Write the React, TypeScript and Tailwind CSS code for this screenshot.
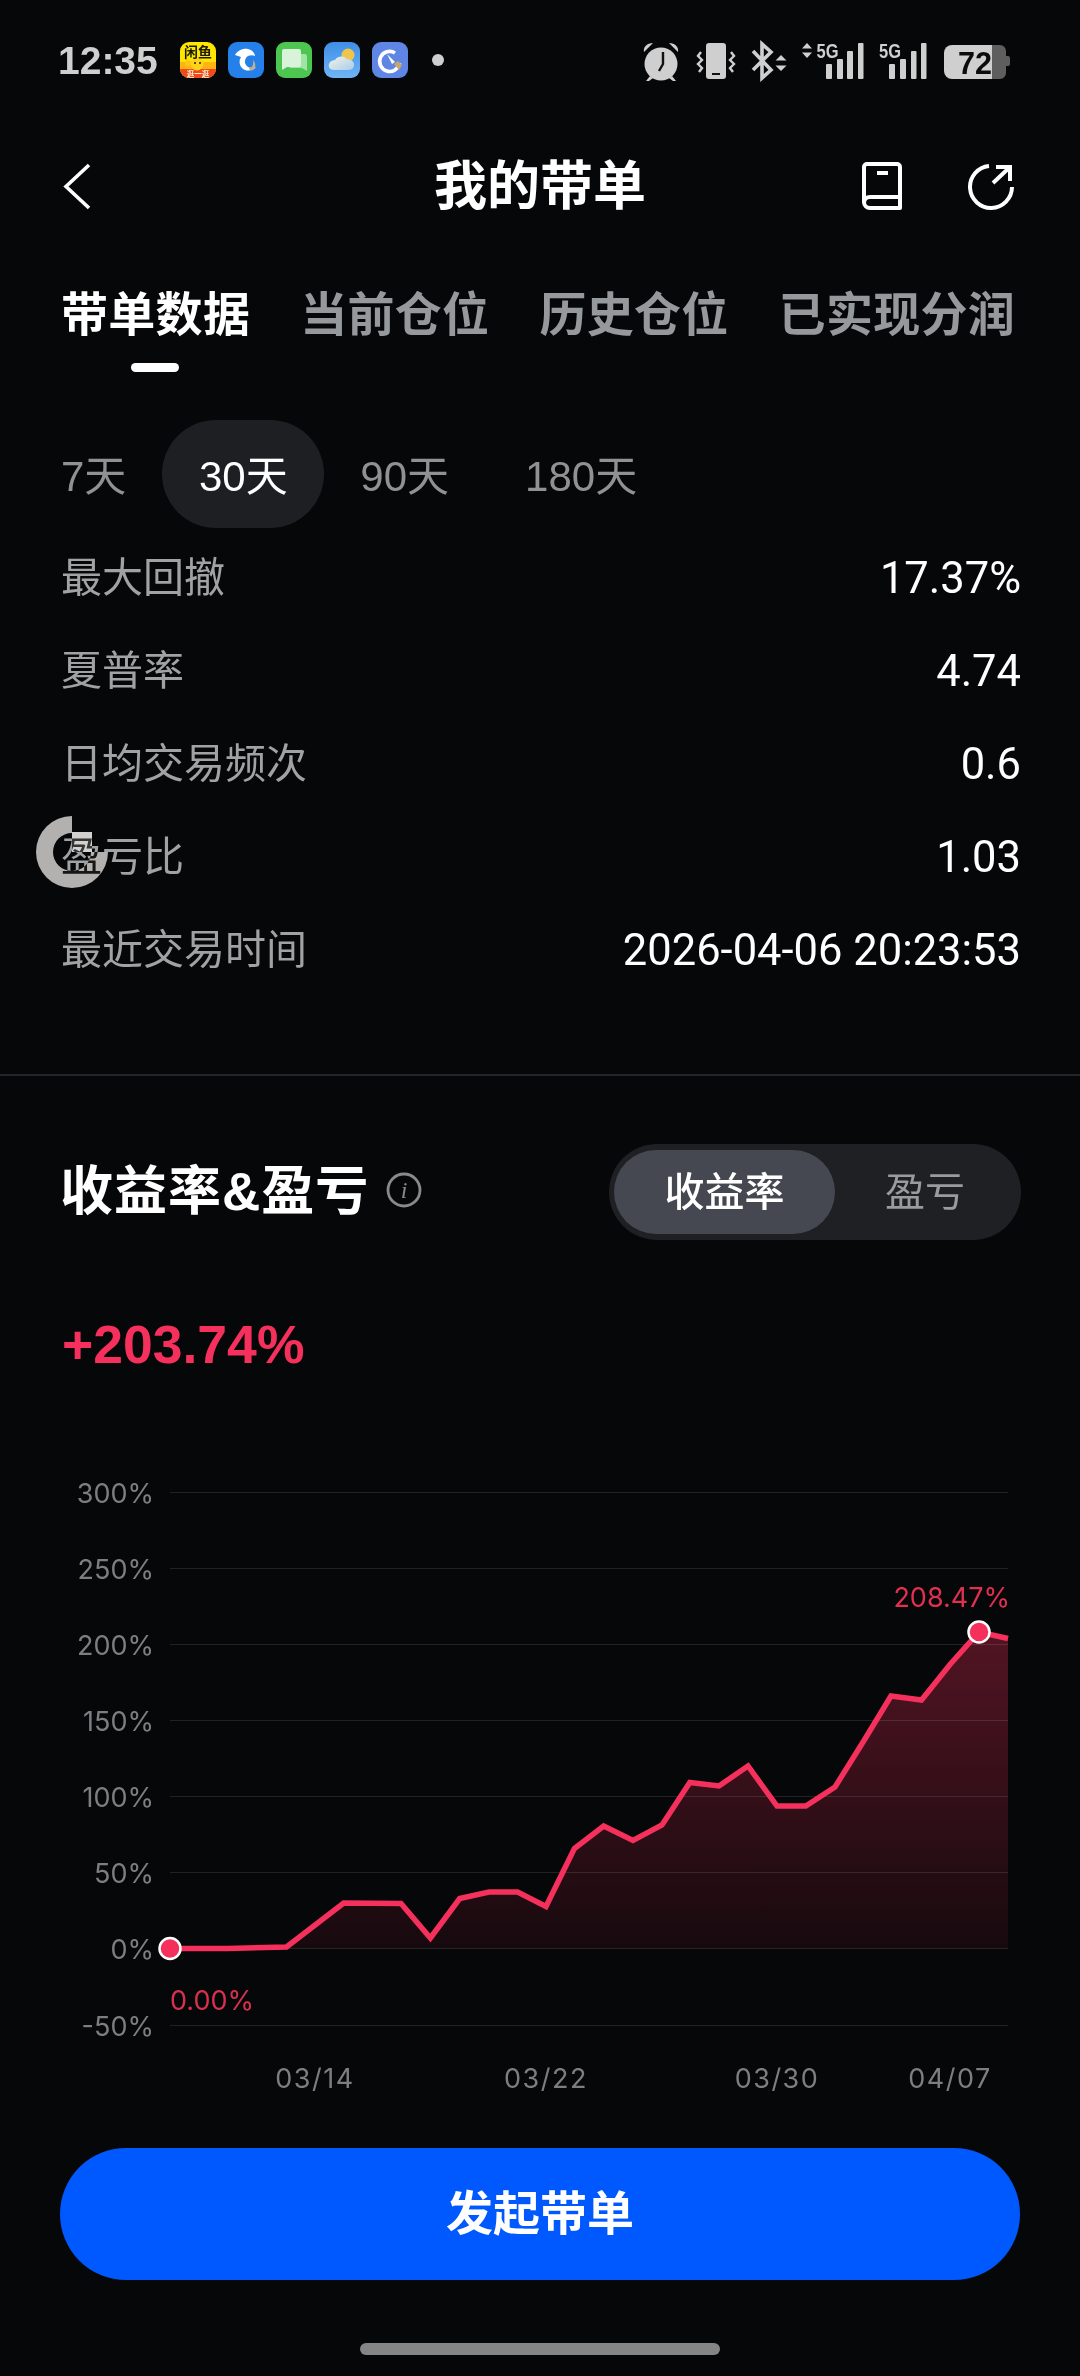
import React from 'react';

const sans = "font-['Liberation_Sans','Noto_Sans_CJK_SC',sans-serif]";
const chartFont = "font-['Inter',sans-serif]";

const rows = [
  ['最大回撤', '17.37%'],
  ['夏普率', '4.74'],
  ['日均交易频次', '0.6'],
  ['盈亏比', '1.03'],
  ['最近交易时间', '2026-04-06 20:23:53'],
];

const yLabels = [
  ['300%', 1492],
  ['250%', 1568],
  ['200%', 1644],
  ['150%', 1720],
  ['100%', 1796],
  ['50%', 1872],
  ['0%', 1948],
  ['-50%', 2025],
] as const;

const xLabels = [
  ['03/14', 315],
  ['03/22', 546],
  ['03/30', 777],
  ['04/07', 950],
] as const;

const line =
  '170,1948.5 227,1948.5 286.5,1947 343.7,1903 401,1903.5 430.4,1938 459.7,1898.5 489,1892 517.6,1892 546,1906.5 574.4,1848.5 603.7,1826 633,1840.4 662,1825 689.8,1782.4 719,1786 748,1766 777,1806 805.8,1806 835,1787 863.7,1741 891,1696 921.5,1700 950,1664.5 979,1632 1008,1638.5';

const AppIcons = () => (
  <div className="flex gap-3">
    <svg width="36" height="36" viewBox="0 0 36 36">
      <defs>
        <clipPath id="icon1">
          <rect width="36" height="36" rx="9" />
        </clipPath>
      </defs>
      <g clipPath="url(#icon1)">
        <rect width="36" height="36" fill="#ffe600" />
        <rect x="0" y="20" width="36" height="8" fill="#ffb414" />
        <rect y="27" width="36" height="9" fill="#ee4a1c" />
        <circle cx="17" cy="22" r="6.5" fill="#ffd21a" />
        <circle cx="8" cy="21" r="3" fill="#ffc61a" />
        <circle cx="15" cy="21" r="1" fill="#222" />
        <circle cx="20" cy="21" r="1" fill="#222" />
        <text x="18" y="15" textAnchor="middle" fontSize="14" fontWeight="700" fill="#1a1a00" className={sans}>闲鱼</text>
        <text x="18" y="34.5" textAnchor="middle" fontSize="7.5" fontWeight="700" fill="#ffe9d0" className={sans}>逛一逛</text>
      </g>
    </svg>
    <svg width="36" height="36" viewBox="0 0 36 36">
      <rect width="36" height="36" rx="9" fill="#2680ea" />
      <path d="M7 13c2-4 8-7 13-6 4 1 7 4 7 7-2-1-5-1-7 0-3 2-4 6-2 9 2 3 6 4 10 2-3 4-10 5-14 1-3-3-3-8-1-11-2-1-4-1-6-2z" fill="#fff" />
      <path d="M21 26c3 0 5-3 4-8 3 3 3 8 0 10-2 1-4 0-4-2z" fill="#c9b08a" />
    </svg>
    <svg width="36" height="36" viewBox="0 0 36 36">
      <rect width="36" height="36" rx="9" fill="#4cc551" />
      <path d="M17 12h12a2 2 0 0 1 2 2v15l-5-3H15a2 2 0 0 1-2-2V14a2 2 0 0 1 4-2z" fill="#a2e3a6" />
      <path d="M8 7h15a2 2 0 0 1 2 2v14a2 2 0 0 1-2 2H11l-5 3V9a2 2 0 0 1 2-2z" fill="#d9f2da" />
    </svg>
    <svg width="36" height="36" viewBox="0 0 36 36">
      <defs>
        <linearGradient id="sky" x1="0" y1="0" x2="0" y2="1">
          <stop offset="0" stopColor="#3f8fe8" />
          <stop offset="1" stopColor="#6fb4f5" />
        </linearGradient>
        <linearGradient id="cloud" x1="0" y1="0" x2="1" y2="1">
          <stop offset="0" stopColor="#f3f2e6" />
          <stop offset="1" stopColor="#a9cdec" />
        </linearGradient>
      </defs>
      <rect width="36" height="36" rx="9" fill="url(#sky)" />
      <circle cx="24" cy="13" r="6.5" fill="#f0c64a" />
      <path d="M10 28c-4 0-6-3-5-6 1-3 4-4 6-4 2-4 9-5 12-1 4 0 8 3 7 7-1 3-3 4-6 4z" fill="url(#cloud)" />
    </svg>
    <svg width="36" height="36" viewBox="0 0 36 36">
      <rect width="36" height="36" rx="9" fill="#5f86e4" />
      <path d="M23 11a10 10 0 1 0 4.5 10" fill="none" stroke="#fff" strokeWidth="3.6" />
      <path d="M15 12l8 8-3 2z" fill="#fff" />
      <path d="M22 22l4-3 4 4-3 5z" fill="#c9a46e" />
    </svg>
  </div>
);

const StatusRight = () => (
  <svg width="375" height="44" viewBox="640 36 375 44" fill="#cfcfcf" className={sans}>
    {/* alarm */}
    <circle cx="661" cy="62" r="16.5" />
    <path d="M644 50c-1-5 3-9 9-9z M678 50c1-5-3-9-9-9z" />
    <path d="M650 74l-4 5h3l4-3z M672 74l4 5h-3l-4-3z" />
    <path d="M663 50v12l-4 7" fill="none" stroke="#111" strokeWidth="2.4" />
    {/* vibrate */}
    <rect x="706" y="41" width="20" height="36" rx="3" />
    <rect x="712" y="71" width="8" height="2" fill="#111" />
    <path d="M701 50l-3 4 4 4-4 4 4 4-3 4 M731 50l3 4-4 4 4 4-4 4 3 4" fill="none" stroke="#cfcfcf" strokeWidth="2.4" />
    {/* bluetooth */}
    <path d="M753 49l18 19-9 8V42l9 8-18 18" fill="none" stroke="#cfcfcf" strokeWidth="3.6" />
    <path d="M781 53l5.5 5.5h-11z M781 69l5.5-5.5h-11z" />
    {/* 5g 1 */}
    <path d="M807 41l5 5.5h-10z M807 56l5-5.5h-10z" />
    <text x="816.5" y="56" fontSize="20" fontWeight="700" textLength="22" lengthAdjust="spacingAndGlyphs">5G</text>
    <rect x="826" y="62" width="6" height="15" rx="1" />
    <rect x="837" y="57" width="6" height="20" rx="1" />
    <rect x="847" y="49" width="6" height="28" rx="1" />
    <rect x="858" y="41" width="5.5" height="36" rx="1" />
    {/* 5g 2 */}
    <text x="879" y="56" fontSize="20" fontWeight="700" textLength="22" lengthAdjust="spacingAndGlyphs">5G</text>
    <rect x="889" y="62" width="6" height="15" rx="1" />
    <rect x="900" y="57" width="6" height="20" rx="1" />
    <rect x="911" y="49" width="5.5" height="28" rx="1" />
    <rect x="921" y="41" width="5.5" height="36" rx="1" />
    {/* battery */}
    <path d="M992 43h8a6 6 0 0 1 6 6v22a6 6 0 0 1-6 6h-8z M1006 54h2a2 2 0 0 1 2 2v6a2 2 0 0 1-2 2h-2z" fill="#5e5e5e" />
    <path d="M952 43h40v34h-40a8 8 0 0 1-8-8V51a8 8 0 0 1 8-8z" fill="#cfcfcf" />
    <text x="958" y="72" fontSize="32" fontWeight="700" fill="#0b0b0b" textLength="34" lengthAdjust="spacingAndGlyphs">72</text>
  </svg>
);

const App: React.FC = () => {
  return (
    <div className={`relative w-[1080px] h-[2376px] overflow-hidden bg-[#060708] text-white ${sans}`}>
      {/* status bar */}
      <div className="flex items-center h-[120px] pl-[58px]">
        <span className="w-[122px] text-[39px] font-bold text-[#cfcfcf] leading-none">12:35</span>
        <AppIcons />
        <span className="ml-[24px] w-[12px] h-[12px] rounded-full bg-[#cfcfcf]" />
        <div className="ml-auto mr-[65px]">
          <StatusRight />
        </div>
      </div>

      {/* nav */}
      <div className="grid grid-cols-[1fr_auto_1fr] items-center h-[132px] pl-[62px] pr-[65px]">
        <svg width="30" height="48" viewBox="0 0 30 48" fill="none" stroke="#fff" strokeWidth="3.6">
          <path d="M27 3L4 24.5 27 46" />
        </svg>
        <h1 className="text-[53px] font-bold leading-none ml-[3px]">我的带单</h1>
        <div className="flex items-center justify-end gap-[64px]">
          <svg width="42" height="50" viewBox="0 0 42 50" fill="none" stroke="#fff" strokeWidth="4">
            <path d="M6 3h30a3 3 0 0 1 3 3v41H9a6 6 0 0 1-6-6V6a3 3 0 0 1 3-3z" strokeLinejoin="round" />
            <path d="M3 42a6 6 0 0 1 6-6h30" />
            <rect x="16" y="10" width="11" height="4" fill="#fff" stroke="none" />
          </svg>
          <svg width="48" height="48" viewBox="0 0 48 48" fill="none" stroke="#fff" strokeWidth="4">
            <path d="M22 4a21 21 0 1 0 23 21" />
            <path d="M26 21L43 5M29 5h14v14" />
          </svg>
        </div>
      </div>

      {/* tabs */}
      <div className="h-[120px] pl-[61px]">
        <div className="flex gap-[50px] text-[47px] tracking-[0.3px] leading-[126px] h-[111px] font-semibold whitespace-nowrap">
          <span className="text-white">带单数据</span>
          <span className="text-[#96999c]">当前仓位</span>
          <span className="text-[#96999c]">历史仓位</span>
          <span className="text-[#96999c]">已实现分润</span>
        </div>
        <div className="ml-[70px] w-[48px] h-[9px] rounded-full bg-white" />
      </div>

      {/* period */}
      <div className="flex items-start h-[108px] mt-[48px] pl-[61px] text-[42px] leading-[114px] text-[#8f9193]">
        <span>7天</span>
        <span className="ml-[36px] w-[162px] h-[108px] rounded-full bg-[#1d1f23] text-white text-center">30天</span>
        <span className="ml-[36px]">90天</span>
        <span className="ml-[76px]">180天</span>
      </div>

      {/* stats */}
      <div className="mt-[4px] pl-[61px] pr-[59px]">
        {rows.map(([label, value]) => (
          <div key={label} className="flex items-center justify-between h-[93px]">
            <span className="text-[#a0a2a4] text-[41px]">{label}</span>
            <span className="text-white text-[43.5px] font-['Roboto',sans-serif]">{value}</span>
          </div>
        ))}
      </div>

      <div className="mt-[77px] h-[2px] bg-[#222427]" />

      {/* section header */}
      <div className="flex items-center justify-between mt-[68px] pl-[60px] pr-[59px] h-[96px]">
        <div className="flex items-center">
          <span className="text-[53px] font-bold tracking-[1px]">收益率&amp;盈亏</span>
          <svg width="36" height="36" viewBox="0 0 36 36" className="ml-[17px] -mt-1">
            <circle cx="18" cy="18" r="16" fill="none" stroke="#8a8a8a" strokeWidth="2.8" />
            <text x="18" y="26" textAnchor="middle" fontSize="24" fontStyle="italic" fill="#8a8a8a" className="font-['Liberation_Serif',serif]">i</text>
          </svg>
        </div>
        <div className="flex items-center w-[412px] h-[96px] rounded-full bg-[#1e2024] pl-[5px]">
          <span className="flex items-center justify-center w-[221px] h-[84px] rounded-full bg-[#454850] text-[40px] font-medium">收益率</span>
          <span className="flex-1 text-center text-[40px] text-[#9a9b9d] pr-[6px]">盈亏</span>
        </div>
      </div>

      <div className="mt-[75px] pl-[62px] h-[60px] text-[53.5px] font-bold leading-[60px] text-[#f5305c]">+203.74%</div>

      {/* chart */}
      <svg width="1080" height="688" viewBox="0 1460 1080 688" className={`block mt-[85px] ${chartFont}`}>
        <defs>
          <linearGradient id="area" x1="0" y1="1632" x2="0" y2="1948" gradientUnits="userSpaceOnUse">
            <stop offset="0" stopColor="#f5305c" stopOpacity="0.32" />
            <stop offset="1" stopColor="#f5305c" stopOpacity="0.07" />
          </linearGradient>
        </defs>
        <polygon points={`${line} 1008,1948.5 170,1948.5`} fill="url(#area)" />
        {yLabels.map(([t, y]) => (
          <g key={t}>
            <line x1="170" x2="1008" y1={y + 0.5} y2={y + 0.5} stroke="#fff" strokeOpacity="0.11" strokeWidth="1.2" />
            <text x="154" y={y + 10.5} textAnchor="end" fontSize="27" fill="#7c7e80">{t}</text>
          </g>
        ))}
        <polyline points={line} fill="none" stroke="#f5305c" strokeWidth="5.5" strokeLinejoin="miter" />
        <circle cx="170" cy="1948.5" r="10.5" fill="#f5305c" stroke="#fff" strokeWidth="2.5" />
        <circle cx="979" cy="1632" r="10.5" fill="#f5305c" stroke="#fff" strokeWidth="2.5" />
        <text x="170" y="2010" fontSize="27" fill="#d8304f">0.00%</text>
        <text x="1010" y="1607" textAnchor="end" fontSize="27" fill="#e0304f">208.47%</text>
        {xLabels.map(([t, x]) => (
          <text key={t} x={x} y="2088" textAnchor="middle" fontSize="27" letterSpacing="1.5" fill="#7c7e80">{t}</text>
        ))}
      </svg>

      <button className="block mx-[60px] w-[960px] h-[132px] rounded-full bg-[#0059ff] text-[47px] font-bold text-white">发起带单</button>

      <div className="mt-[63px] mx-auto w-[360px] h-[12px] rounded-full bg-[#858585]" />

      {/* floating ball */}
      <svg width="72" height="72" viewBox="0 0 72 72" className="absolute left-[36px] top-[816px] mix-blend-difference">
        <path d="M36 0v17a19 19 0 1 0 19 19h17A36 36 0 1 1 36 0z" fill="#b8b8b8" />
        <rect x="36" y="16" width="20" height="20" fill="#d8d8d8" />
      </svg>
    </div>
  );
};

export default App;
